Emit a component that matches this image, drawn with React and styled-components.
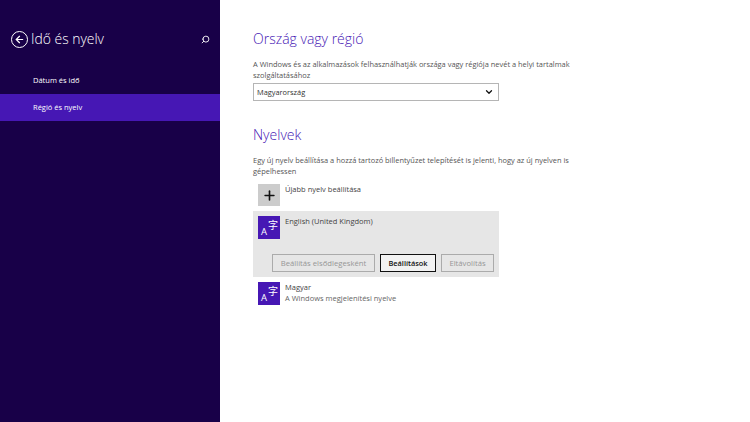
import React from 'react';
import styled, { createGlobalStyle } from 'styled-components';
import { ArrowLeft, ChevronDown, Plus, Search } from 'lucide-react';

const GlobalStyle = createGlobalStyle`
  html, body {
    margin: 0;
    padding: 0;
    height: 100%;
    background: #fff;
  }
  #root {
    height: 100%;
  }
`;

const Page = styled.div`
  display: flex;
  width: 750px;
  height: 422px;
  overflow: hidden;
  font-family: 'Open Sans', 'Liberation Sans', sans-serif;
  color: #333;
`;

const Sidebar = styled.nav`
  flex: 0 0 220px;
  background: #180048;
  color: #fff;
`;

const SidebarHeader = styled.div`
  display: flex;
  align-items: center;
  height: 20px;
  padding: 29px 10px 0 11px;
  margin-bottom: 18px;
`;

const BackButton = styled.div`
  display: flex;
  align-items: center;
  justify-content: center;
  box-sizing: border-box;
  width: 17px;
  height: 17px;
  margin-right: 3px;
  border: 1.6px solid #fff;
  border-radius: 50%;
`;

const SidebarTitle = styled.h1`
  flex: 1;
  margin: 0;
  font-size: 13.9px;
  font-weight: 300;
  line-height: 20px;
`;

const SearchIcon = styled(Search)`
  transform: scaleX(-1);
`;

const NavItem = styled.div`
  height: 27px;
  padding-left: 33px;
  font-size: 7.5px;
  line-height: 27px;
  background: ${(p) => (p.$active ? '#4617b4' : 'transparent')};
`;

const Main = styled.main`
  flex: 1;
  padding: 29px 0 0 33px;
`;

const Section = styled.section`
  width: 246px;
  margin-bottom: 24px;
`;

const Heading = styled.h2`
  margin: 0 0 10px;
  font-size: 14px;
  font-weight: 300;
  line-height: 20px;
  color: #4617b4;
`;

const Description = styled.p`
  width: 340px;
  margin: 0 0 2px;
  font-size: 7.45px;
  line-height: 11px;
  color: #555;
`;

const Select = styled.div`
  display: flex;
  align-items: center;
  justify-content: space-between;
  box-sizing: border-box;
  height: 18px;
  padding: 0 4px 0 3px;
  border: 1px solid #b5b5b5;
  font-size: 7.4px;
  color: #333;
`;

const LanguageList = styled.div`
  margin-top: 7px;
`;

const AddRow = styled.div`
  display: flex;
  gap: 5px;
  height: 27px;
  padding-left: 5px;
  font-size: 7.5px;
  line-height: 11px;
  color: #444;
`;

const AddTile = styled.div`
  display: flex;
  align-items: center;
  justify-content: center;
  width: 22px;
  height: 22px;
  background: #cccccc;
  color: #111;
`;

const LanguageItem = styled.div`
  box-sizing: border-box;
  height: ${(p) => (p.$selected ? '66px' : 'auto')};
  padding: 5px;
  background: ${(p) => (p.$selected ? '#e6e6e6' : 'transparent')};
`;

const LanguageRow = styled.div`
  display: flex;
  gap: 5px;
`;

const LanguageTile = styled.svg`
  display: block;
  flex: none;
  width: 22px;
  height: 23px;
`;

const LanguageName = styled.div`
  font-size: 7.5px;
  line-height: 11px;
  color: #444;
`;

const LanguageNote = styled.div`
  font-size: 7.5px;
  line-height: 11px;
  color: #666;
`;

const ButtonRow = styled.div`
  display: flex;
  justify-content: flex-end;
  gap: 5px;
  margin-top: 15px;
`;

const ActionButton = styled.div`
  box-sizing: border-box;
  width: ${(p) => p.$width}px;
  height: 18px;
  border: 1px solid ${(p) => (p.$primary ? '#111' : '#ababab')};
  background: ${(p) => (p.$primary ? '#f2f2f2' : 'transparent')};
  font-size: ${(p) => (p.$primary ? 7.4 : 7.7)}px;
  font-weight: ${(p) => (p.$primary ? 600 : 400)};
  line-height: 16px;
  text-align: center;
  color: ${(p) => (p.$primary ? '#111' : '#969696')};
`;

const LangGlyph = () => (
  <LanguageTile viewBox="0 0 22 23">
    <rect width="22" height="23" fill="#4617b4" />
    <text x="3" y="19" fontSize="9.5" fill="#fff" fontFamily="'Open Sans', sans-serif">
      A
    </text>
    <text x="10" y="12.5" fontSize="10" fill="#fff" fontFamily="'Noto Sans CJK SC', sans-serif">
      字
    </text>
  </LanguageTile>
);

const App = () => (
  <Page>
    <GlobalStyle />
    <Sidebar>
      <SidebarHeader>
        <BackButton>
          <ArrowLeft size={11} strokeWidth={2.6} color="#fff" />
        </BackButton>
        <SidebarTitle>Idő és nyelv</SidebarTitle>
        <SearchIcon size={9} strokeWidth={2.4} color="#fff" />
      </SidebarHeader>
      <NavItem>Dátum és idő</NavItem>
      <NavItem $active>Régió és nyelv</NavItem>
    </Sidebar>
    <Main>
      <Section>
        <Heading>Ország vagy régió</Heading>
        <Description>
          A Windows és az alkalmazások felhasználhatják országa vagy régiója nevét a helyi
          tartalmak szolgáltatásához
        </Description>
        <Select>
          Magyarország
          <ChevronDown size={10} strokeWidth={3} color="#111" />
        </Select>
      </Section>
      <Section>
        <Heading>Nyelvek</Heading>
        <Description>
          Egy új nyelv beállítása a hozzá tartozó billentyűzet telepítését is jelenti, hogy az új
          nyelven is gépelhessen
        </Description>
        <LanguageList>
          <AddRow>
            <AddTile>
              <Plus size={15} strokeWidth={2.6} />
            </AddTile>
            Újabb nyelv beállítása
          </AddRow>
          <LanguageItem $selected>
            <LanguageRow>
              <LangGlyph />
              <LanguageName>English (United Kingdom)</LanguageName>
            </LanguageRow>
            <ButtonRow>
              <ActionButton $width={103}>Beállítás elsődlegesként</ActionButton>
              <ActionButton $primary $width={56}>
                Beállítások
              </ActionButton>
              <ActionButton $width={53}>Eltávolítás</ActionButton>
            </ButtonRow>
          </LanguageItem>
          <LanguageItem>
            <LanguageRow>
              <LangGlyph />
              <div>
                <LanguageName>Magyar</LanguageName>
                <LanguageNote>A Windows megjelenítési nyelve</LanguageNote>
              </div>
            </LanguageRow>
          </LanguageItem>
        </LanguageList>
      </Section>
    </Main>
  </Page>
);

export default App;
